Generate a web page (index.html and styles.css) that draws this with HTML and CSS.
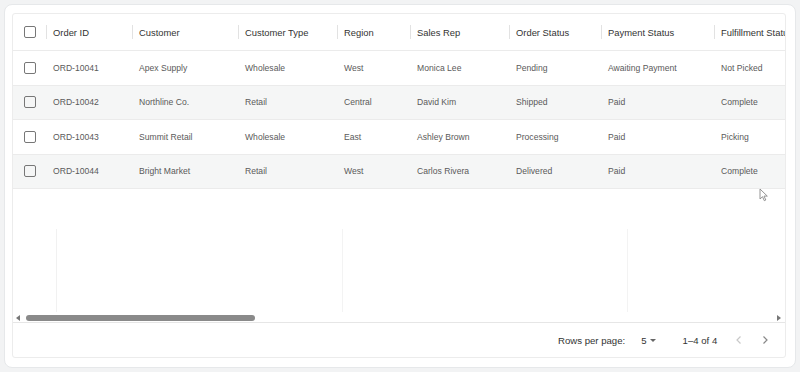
FILE: index.html
```html
<!DOCTYPE html>
<html lang="en">
<head>
<meta charset="utf-8">
<title>Orders</title>
<link rel="stylesheet" href="styles.css">
</head>
<body>
<div class="card">
  <div class="grid">
    <div class="row head">
      <div class="cell check"><span class="box"></span></div>
      <div class="cell">Order ID</div>
      <div class="cell">Customer</div>
      <div class="cell">Customer Type</div>
      <div class="cell">Region</div>
      <div class="cell">Sales Rep</div>
      <div class="cell">Order Status</div>
      <div class="cell">Payment Status</div>
      <div class="cell last">Fulfillment Status</div>
    </div>
    <div class="row">
      <div class="cell check"><span class="box"></span></div>
      <div class="cell">ORD-10041</div>
      <div class="cell">Apex Supply</div>
      <div class="cell">Wholesale</div>
      <div class="cell">West</div>
      <div class="cell">Monica Lee</div>
      <div class="cell">Pending</div>
      <div class="cell">Awaiting Payment</div>
      <div class="cell">Not Picked</div>
    </div>
    <div class="row alt">
      <div class="cell check"><span class="box"></span></div>
      <div class="cell">ORD-10042</div>
      <div class="cell">Northline Co.</div>
      <div class="cell">Retail</div>
      <div class="cell">Central</div>
      <div class="cell">David Kim</div>
      <div class="cell">Shipped</div>
      <div class="cell">Paid</div>
      <div class="cell">Complete</div>
    </div>
    <div class="row">
      <div class="cell check"><span class="box"></span></div>
      <div class="cell">ORD-10043</div>
      <div class="cell">Summit Retail</div>
      <div class="cell">Wholesale</div>
      <div class="cell">East</div>
      <div class="cell">Ashley Brown</div>
      <div class="cell">Processing</div>
      <div class="cell">Paid</div>
      <div class="cell">Picking</div>
    </div>
    <div class="row alt">
      <div class="cell check"><span class="box"></span></div>
      <div class="cell">ORD-10044</div>
      <div class="cell">Bright Market</div>
      <div class="cell">Retail</div>
      <div class="cell">West</div>
      <div class="cell">Carlos Rivera</div>
      <div class="cell">Delivered</div>
      <div class="cell">Paid</div>
      <div class="cell">Complete</div>
    </div>
    <div class="filler"></div>
    <div class="scrollbar">
      <span class="arrow left"></span>
      <div class="track"><span class="thumb"></span></div>
      <span class="arrow right"></span>
    </div>
    <div class="footer">
      <span class="label">Rows per page:</span>
      <span class="select">5 <span class="caret"></span></span>
      <span class="range">1–4 of 4</span>
      <span class="nav">
        <svg class="chev off" width="10" height="10" viewBox="0 0 10 10"><path d="M6.5 1.5 3 5l3.5 3.5" fill="none" stroke="currentColor" stroke-width="1.2"/></svg>
        <svg class="chev" width="10" height="10" viewBox="0 0 10 10"><path d="M3.5 1.5 7 5 3.5 8.5" fill="none" stroke="currentColor" stroke-width="1.2"/></svg>
      </span>
    </div>
  </div>
  <svg class="cursor" width="10" height="14" viewBox="0 0 10 14"><path d="M1 1v10l2.5-2.3 1.8 4 1.5-.7-1.8-3.9H8.3z" fill="#fff" stroke="#888" stroke-width="0.9"/></svg>
</div>
</body>
</html>
```

FILE: styles.css
```css
* { box-sizing: border-box; }
html, body { margin: 0; }
body {
  width: 800px;
  height: 372px;
  padding: 4px;
  background: #f2f3f4;
  font-family: "Liberation Sans", Arial, sans-serif;
  overflow: hidden;
}
.card {
  position: relative;
  height: 364px;
  background: #fff;
  border: 1px solid #e6e8ea;
  border-radius: 8px;
  padding: 8px 9px 9px 7px;
}
.grid {
  height: 100%;
  border: 1px solid #ececec;
  border-radius: 3px;
  display: flex;
  flex-direction: column;
  overflow: hidden;
}
.row {
  display: grid;
  grid-template-columns: 33px 86px 106px 99px 73px 99px 92px 113px 150px;
  flex: none;
  width: 851px;
  height: 34.5px;
  border-bottom: 1px solid #ebebeb;
  font-size: 8.6px;
  color: #5a5a5a;
}
.row.alt { background: #f5f6f6; }
.row.head {
  height: 37px;
  font-size: 9.4px;
  color: #333;
}
.cell {
  display: flex;
  align-items: center;
  padding-left: 7px;
  white-space: nowrap;
  overflow: hidden;
  position: relative;
}
.head .cell + .cell::before {
  content: "";
  position: absolute;
  left: 0;
  top: 11px;
  height: 14px;
  width: 1px;
  background: #e2e2e2;
}
.cell.check { padding-left: 11px; }
.box {
  width: 12px;
  height: 12px;
  border: 1.5px solid #777;
  border-radius: 2px;
}
.filler {
  flex: 1;
  background:
    linear-gradient(#f1f1f1, #f1f1f1) 43px 40px / 1px 100% no-repeat,
    linear-gradient(#f3f3f3, #f3f3f3) 329px 40px / 1px 100% no-repeat,
    linear-gradient(#f3f3f3, #f3f3f3) 614px 40px / 1px 100% no-repeat;
}
.scrollbar {
  flex: none;
  height: 11px;
  display: flex;
  align-items: center;
  padding: 1px 4px 0 3px;
  gap: 6px;
  border-bottom: 1px solid #e6e6e6;
}
.arrow {
  width: 0;
  height: 0;
  border-top: 3px solid transparent;
  border-bottom: 3px solid transparent;
}
.arrow.left { border-right: 4px solid #777; }
.arrow.right { border-left: 4px solid #777; }
.track { flex: 1; display: flex; }
.thumb {
  width: 229px;
  height: 6px;
  border-radius: 3px;
  background: #8a8a8a;
}
.footer {
  flex: none;
  height: 34px;
  display: flex;
  align-items: center;
  font-size: 9.6px;
  color: #333;
  padding-left: 545px;
}
.select {
  margin-left: 16px;
  display: inline-flex;
  align-items: center;
  gap: 3px;
}
.caret {
  width: 0;
  height: 0;
  border-left: 3px solid transparent;
  border-right: 3px solid transparent;
  border-top: 3px solid #666;
}
.range { margin-left: 27px; }
.nav {
  margin-left: 17px;
  display: inline-flex;
  gap: 16px;
}
.chev { color: #888; }
.chev.off { color: #c8c8c8; }
.cursor {
  position: absolute;
  left: 754px;
  top: 183px;
}
```
